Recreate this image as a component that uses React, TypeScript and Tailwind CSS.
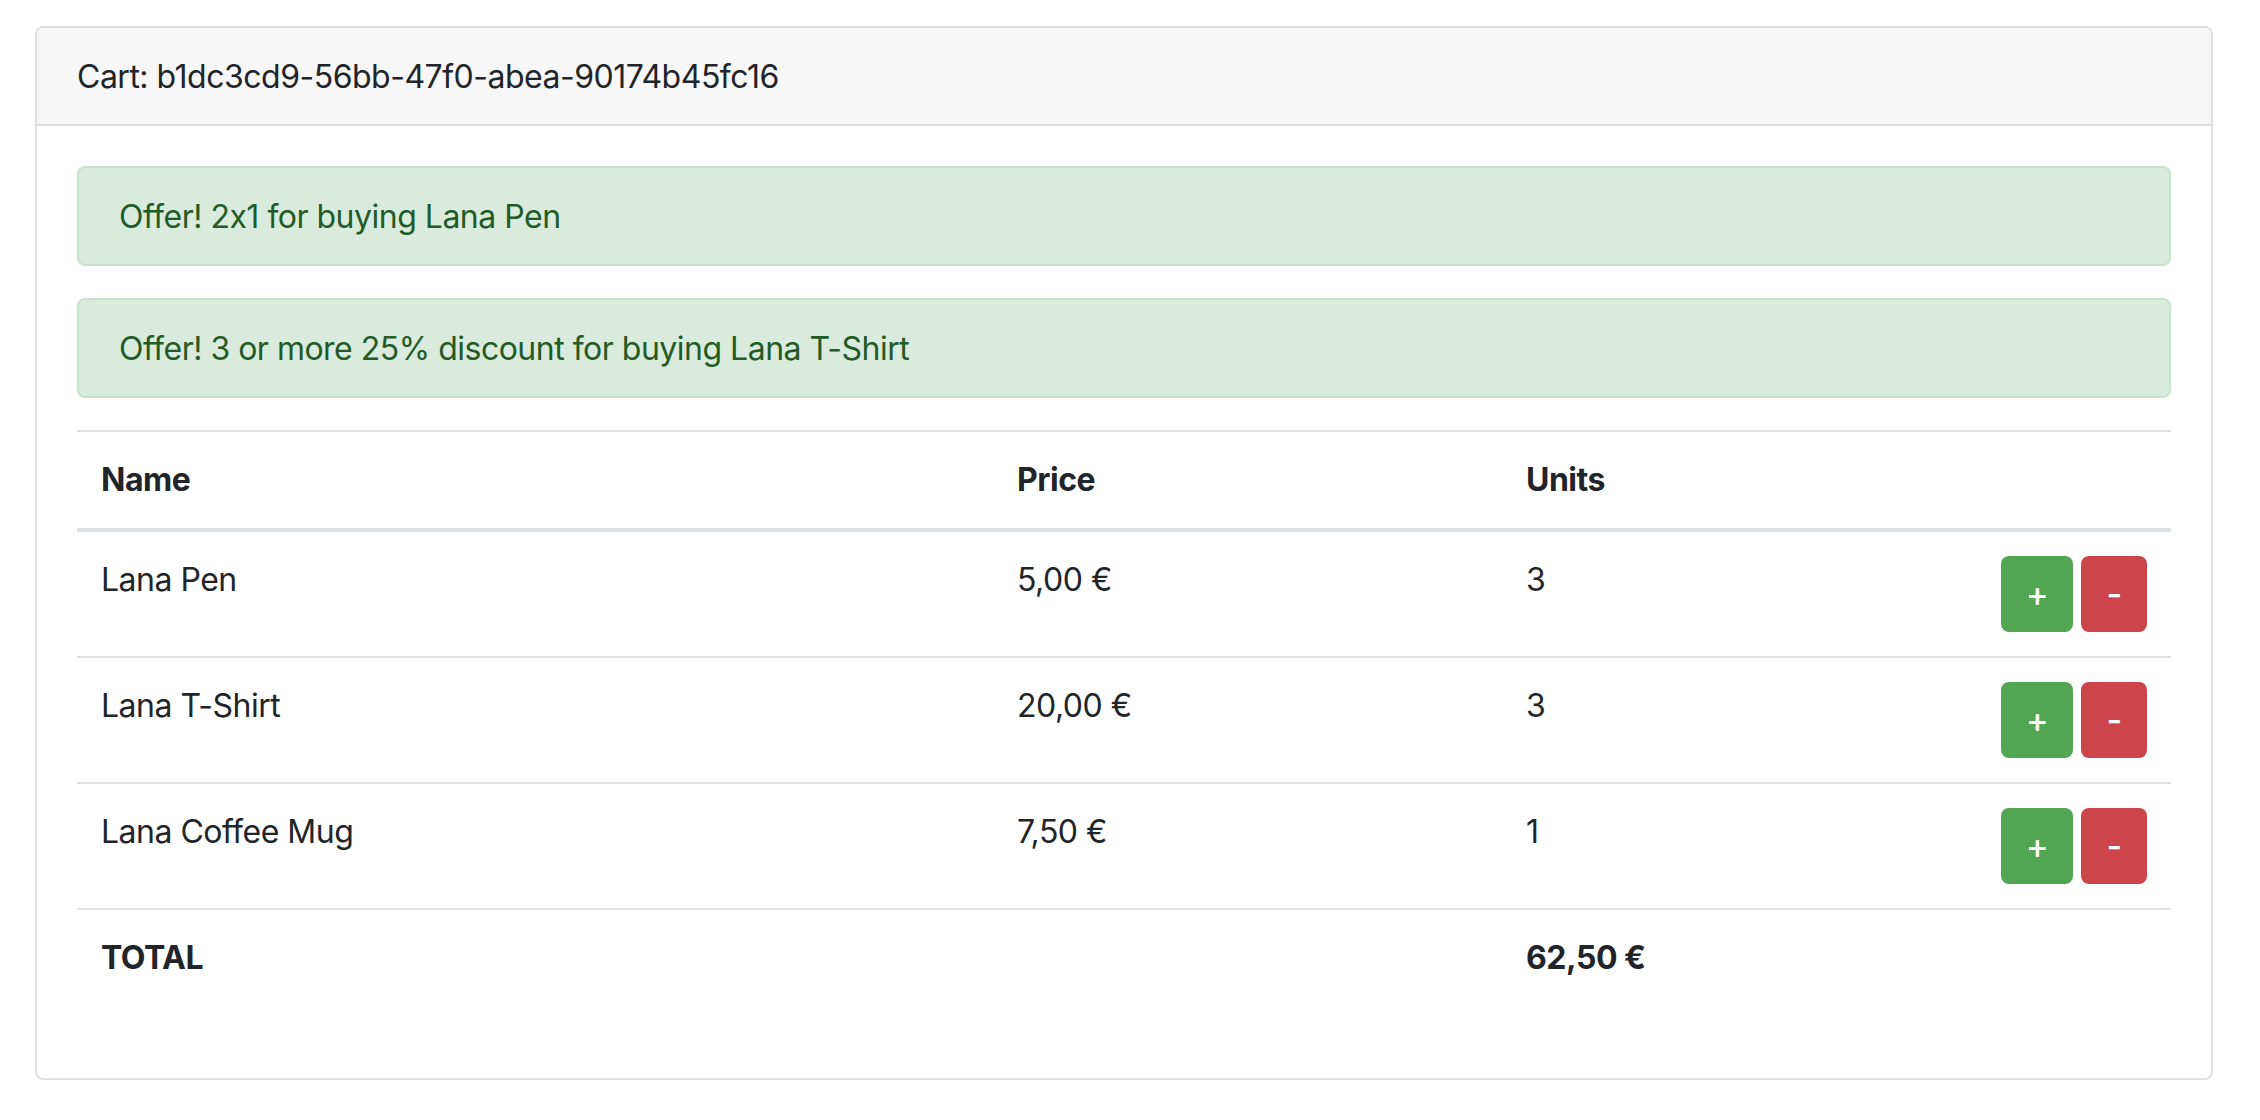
const offers = [
  "Offer! 2x1 for buying Lana Pen",
  "Offer! 3 or more 25% discount for buying Lana T-Shirt",
];

const items = [
  { name: "Lana Pen", price: "5,00 €", units: 3 },
  { name: "Lana T-Shirt", price: "20,00 €", units: 3 },
  { name: "Lana Coffee Mug", price: "7,50 €", units: 1 },
];

const row = "grid grid-cols-[916px_509px_1fr_auto]";

export default function App() {
  return (
    <div className="min-h-screen bg-white pt-[26px] pl-[35px] font-['Inter',sans-serif] [font-feature-settings:'calt'_0] tracking-[-0.5px] text-[32px] leading-[48px] text-[#212529]">
      <div className="w-[2178px] rounded-[8px] border-2 border-[#dfdfdf] overflow-hidden">
        <div className="bg-[#f7f7f7] border-b-2 border-[#dfdfdf] px-[40px] pt-[25px] pb-[23px]">
          Cart: b1dc3cd9-56bb-47f0-abea-90174b45fc16
        </div>
        <div className="p-[40px]">
          {offers.map((o) => (
            <div
              key={o}
              className="mb-[32px] rounded-[8px] border-2 border-[#c6e4cb] bg-[#d9ebdc] px-[40px] pt-[25px] pb-[23px] text-[#245a26]"
            >
              {o}
            </div>
          ))}

          <div className="mb-[32px]">
            <div className={`${row} border-t-2 border-b-4 border-[#dee2e6] font-bold`}>
              <div className="p-[24px]">Name</div>
              <div className="p-[24px]">Price</div>
              <div className="p-[24px]">Units</div>
              <div className="p-[24px]" />
            </div>
            {items.map((it, i) => (
              <div key={it.name} className={`${row} ${i > 0 ? "border-t-2 border-[#dee2e6]" : ""}`}>
                <div className="p-[24px]">{it.name}</div>
                <div className="p-[24px]">{it.price}</div>
                <div className="p-[24px]">{it.units}</div>
                <div className="flex justify-end gap-[8px] p-[24px]">
                  <button className="h-[76px] w-[72px] rounded-[8px] bg-[#52a552] text-[34px] font-medium text-white">+</button>
                  <button className="h-[76px] w-[66px] rounded-[8px] bg-[#cd454b] text-[34px] font-medium text-white">-</button>
                </div>
              </div>
            ))}
            <div className={`${row} border-t-2 border-[#dee2e6] font-bold`}>
              <div className="p-[24px]">TOTAL</div>
              <div className="p-[24px]" />
              <div className="p-[24px]">62,50 €</div>
              <div className="p-[24px]" />
            </div>
          </div>
        </div>
      </div>
    </div>
  );
}
